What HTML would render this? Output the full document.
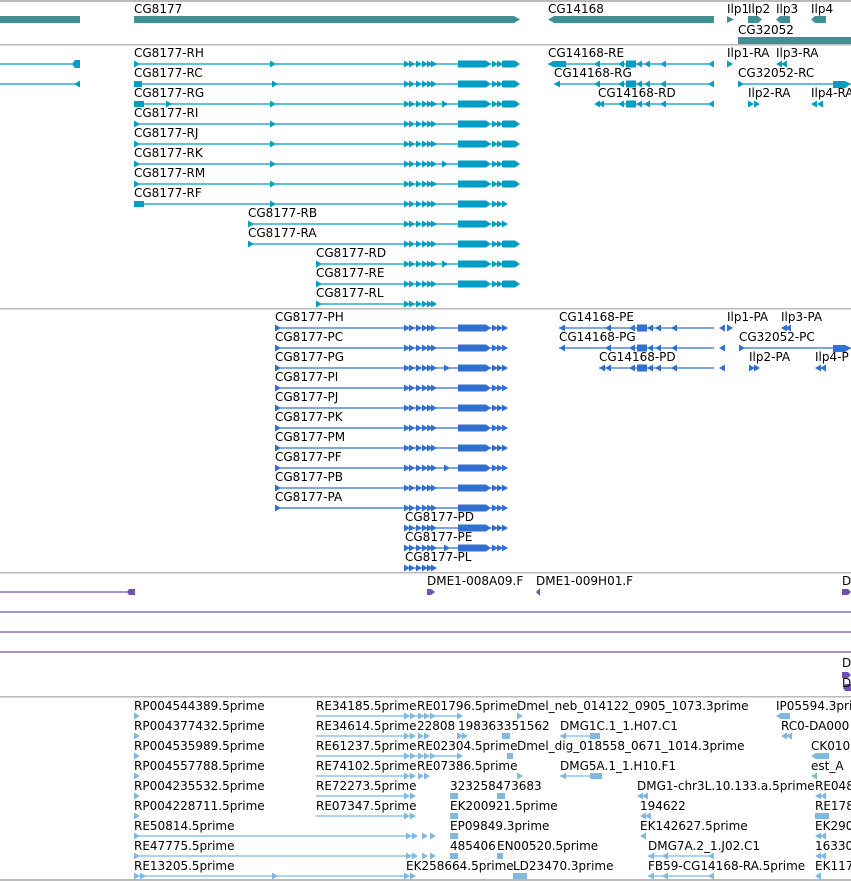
<!DOCTYPE html>
<html><head><meta charset="utf-8"><style>
html,body{margin:0;padding:0;background:#fff;width:851px;height:881px;overflow:hidden}
svg{display:block}
text{font-family:"DejaVu Sans","Liberation Sans",sans-serif;font-size:12px;fill:#000}
</style></head><body>
<svg width="851" height="881" viewBox="0 0 851 881" xmlns="http://www.w3.org/2000/svg">
<defs>
<polygon id="ra" points="0,-3.5 6,0 0,3.5"/>
<polygon id="la" points="6,-3.5 0,0 6,3.5"/>
<g id="tr">
 <use href="#ra" x="404"/><use href="#ra" x="409"/><use href="#ra" x="416"/><use href="#ra" x="422"/><use href="#ra" x="427"/><use href="#ra" x="431"/>
 <rect x="458" y="-3.5" width="28" height="7"/><polygon points="486,-3.5 491,0 486,3.5"/>
 <use href="#ra" x="492"/><use href="#ra" x="497"/><use href="#ra" x="502"/>
</g>
<g id="tre"><use href="#tr"/><rect x="503" y="-3.5" width="12" height="7"/><polygon points="515,-3.5 520,0 515,3.5"/></g>
<g id="cgl">
 <use href="#la" x="594"/><use href="#la" x="618"/><rect x="626" y="-3.5" width="10" height="7"/><use href="#la" x="636"/><use href="#la" x="644"/><use href="#la" x="660"/><use href="#la" x="708"/>
</g>
<g id="ec"><use href="#ra" x="404"/><use href="#ra" x="410"/></g>
</defs>
<g fill="#bbb"><rect x="0" y="0" width="851" height="2"/><rect x="0" y="44" width="851" height="1.5"/><rect x="0" y="308" width="851" height="1.5"/><rect x="0" y="572" width="851" height="1.5"/><rect x="0" y="696" width="851" height="1.5"/><rect x="0" y="879" width="851" height="2"/></g>

<g fill="#3f8f94">
<rect x="0" y="16" width="80" height="7"/>
<rect x="134" y="16" width="380" height="7"/><polygon points="514,16 520,19.5 514,23"/>
<rect x="554" y="16" width="160" height="7"/><polygon points="554,16 548,19.5 554,23"/>
<polygon points="727,16 734,19.5 727,23"/>
<rect x="748" y="16" width="10" height="7"/><polygon points="758,16 762,19.5 758,23"/>
<rect x="780" y="16" width="10" height="7"/><polygon points="780,16 776,19.5 780,23"/>
<rect x="815" y="16" width="11" height="7"/><polygon points="815,16 811,19.5 815,23"/>
<rect x="738" y="37" width="113" height="7"/>
</g>
<text x="134" y="13">CG8177</text><text x="548" y="13">CG14168</text>
<text x="727" y="13">Ilp1</text><text x="748" y="13">Ilp2</text><text x="776" y="13">Ilp3</text><text x="811" y="13">Ilp4</text>
<text x="738" y="34">CG32052</text>

<g fill="#009ec3" stroke="none">
<g stroke="#009ec3" stroke-width="1.2">
<line x1="0" y1="64" x2="80" y2="64"/><line x1="0" y1="84" x2="80" y2="84"/>
<line x1="134" y1="64" x2="515" y2="64"/><line x1="134" y1="84" x2="515" y2="84"/><line x1="134" y1="104" x2="515" y2="104"/>
<line x1="134" y1="124" x2="515" y2="124"/><line x1="134" y1="144" x2="515" y2="144"/><line x1="134" y1="164" x2="515" y2="164"/>
<line x1="134" y1="184" x2="515" y2="184"/><line x1="134" y1="204" x2="505" y2="204"/>
<line x1="248" y1="224" x2="505" y2="224"/><line x1="248" y1="244" x2="515" y2="244"/>
<line x1="316" y1="264" x2="515" y2="264"/><line x1="316" y1="284" x2="515" y2="284"/><line x1="316" y1="304" x2="435" y2="304"/>
<line x1="548" y1="64" x2="714" y2="64"/><line x1="554" y1="84" x2="714" y2="84"/><line x1="598" y1="104" x2="714" y2="104"/>
<line x1="738" y1="84" x2="851" y2="84"/>
</g>
<polygon points="75,60 80,60 80,68 75,68 72,64"/><use href="#la" x="74" y="84"/>
<use href="#ra" x="134" y="64"/><use href="#ra" x="270" y="64"/><use href="#tre" y="64"/>
<rect x="134" y="81" width="8" height="6"/><use href="#ra" x="272" y="84"/><use href="#tre" y="84"/>
<rect x="134" y="101" width="10" height="6"/><use href="#ra" x="166" y="104"/><use href="#ra" x="270" y="104"/><use href="#ra" x="442" y="104"/><use href="#tre" y="104"/>
<use href="#ra" x="134" y="124"/><use href="#ra" x="270" y="124"/><use href="#tre" y="124"/>
<use href="#ra" x="134" y="144"/><use href="#ra" x="270" y="144"/><use href="#tre" y="144"/>
<use href="#ra" x="134" y="164"/><use href="#ra" x="270" y="164"/><use href="#ra" x="442" y="164"/><use href="#tre" y="164"/>
<use href="#ra" x="134" y="184"/><use href="#ra" x="270" y="184"/><use href="#tre" y="184"/>
<rect x="134" y="201" width="10" height="6"/><use href="#ra" x="270" y="204"/><use href="#tr" y="204"/>
<use href="#ra" x="248" y="224"/><use href="#tr" y="224"/>
<use href="#ra" x="248" y="244"/><use href="#tre" y="244"/>
<use href="#ra" x="316" y="264"/><use href="#ra" x="442" y="264"/><use href="#tre" y="264"/>
<use href="#ra" x="316" y="284"/><use href="#tre" y="284"/>
<use href="#ra" x="316" y="304"/><use href="#ra" x="404" y="304"/><use href="#ra" x="409" y="304"/><use href="#ra" x="416" y="304"/><use href="#ra" x="422" y="304"/><use href="#ra" x="427" y="304"/><use href="#ra" x="431" y="304"/>
<use href="#cgl" y="64"/><rect x="554" y="61" width="12" height="6"/><use href="#la" x="548" y="64"/>
<use href="#cgl" y="84"/><use href="#la" x="554" y="84"/>
<use href="#cgl" y="104"/><use href="#la" x="598" y="104"/>
<use href="#ra" x="727" y="64"/><use href="#la" x="776" y="64"/><use href="#la" x="781" y="64"/>
<use href="#ra" x="738" y="84"/><rect x="833" y="81" width="12" height="7"/><polygon points="845,81 851,84 845,88"/>
<use href="#ra" x="748" y="104"/><use href="#ra" x="754" y="104"/>
<use href="#la" x="811" y="104"/><use href="#la" x="817" y="104"/>
</g>
<text x="134" y="57">CG8177-RH</text><text x="134" y="77">CG8177-RC</text><text x="134" y="97">CG8177-RG</text>
<text x="134" y="117">CG8177-RI</text><text x="134" y="137">CG8177-RJ</text><text x="134" y="157">CG8177-RK</text>
<text x="134" y="177">CG8177-RM</text><text x="134" y="197">CG8177-RF</text>
<text x="248" y="217">CG8177-RB</text><text x="248" y="237">CG8177-RA</text>
<text x="316" y="257">CG8177-RD</text><text x="316" y="277">CG8177-RE</text><text x="316" y="297">CG8177-RL</text>
<text x="548" y="57">CG14168-RE</text><text x="554" y="77">CG14168-RG</text><text x="598" y="97">CG14168-RD</text>
<text x="727" y="57">Ilp1-RA</text><text x="776" y="57">Ilp3-RA</text><text x="738" y="77">CG32052-RC</text>
<text x="748" y="97">Ilp2-RA</text><text x="811" y="97">Ilp4-RA</text>

<g fill="#3070d0">
<g stroke="#3070d0" stroke-width="1.2">
<line x1="275" y1="328" x2="505" y2="328"/><line x1="275" y1="348" x2="505" y2="348"/><line x1="275" y1="368" x2="505" y2="368"/>
<line x1="275" y1="388" x2="505" y2="388"/><line x1="275" y1="408" x2="505" y2="408"/><line x1="275" y1="428" x2="505" y2="428"/>
<line x1="275" y1="448" x2="505" y2="448"/><line x1="275" y1="468" x2="505" y2="468"/><line x1="275" y1="488" x2="505" y2="488"/>
<line x1="275" y1="508" x2="505" y2="508"/>
<line x1="405" y1="528" x2="505" y2="528"/><line x1="405" y1="548" x2="505" y2="548"/><line x1="405" y1="568" x2="435" y2="568"/>
<line x1="559" y1="328" x2="714" y2="328"/><line x1="559" y1="348" x2="714" y2="348"/><line x1="599" y1="368" x2="714" y2="368"/>
<line x1="739" y1="348" x2="851" y2="348"/>
</g>
<use href="#ra" x="275" y="328"/><use href="#tr" y="328"/>
<use href="#ra" x="275" y="348"/><use href="#tr" y="348"/>
<use href="#ra" x="275" y="368"/><use href="#ra" x="444" y="368"/><use href="#tr" y="368"/>
<use href="#ra" x="275" y="388"/><use href="#tr" y="388"/>
<use href="#ra" x="275" y="408"/><use href="#tr" y="408"/>
<use href="#ra" x="275" y="428"/><use href="#tr" y="428"/>
<use href="#ra" x="275" y="448"/><use href="#tr" y="448"/>
<use href="#ra" x="275" y="468"/><use href="#ra" x="444" y="468"/><use href="#tr" y="468"/>
<use href="#ra" x="275" y="488"/><use href="#tr" y="488"/>
<use href="#ra" x="275" y="508"/><use href="#tr" y="508"/>
<use href="#tr" y="528"/><use href="#ra" x="444" y="548"/><use href="#tr" y="548"/>
<use href="#ra" x="404" y="568"/><use href="#ra" x="409" y="568"/><use href="#ra" x="416" y="568"/><use href="#ra" x="422" y="568"/><use href="#ra" x="427" y="568"/><use href="#ra" x="431" y="568"/>
<use href="#cgl" x="11" y="328"/><use href="#la" x="559" y="328"/><use href="#cgl" x="11" y="348"/><use href="#la" x="559" y="348"/><use href="#cgl" x="11" y="368"/><use href="#la" x="599" y="368"/>
<use href="#ra" x="727" y="328"/><use href="#la" x="781" y="328"/><use href="#la" x="785" y="328"/>
<use href="#ra" x="739" y="348"/><rect x="833" y="345" width="12" height="7"/><polygon points="845,345 851,348 845,352"/>
<use href="#ra" x="749" y="368"/><use href="#ra" x="754" y="368"/><use href="#la" x="815" y="368"/><use href="#la" x="820" y="368"/>
</g>
<text x="275" y="321">CG8177-PH</text><text x="275" y="341">CG8177-PC</text><text x="275" y="361">CG8177-PG</text>
<text x="275" y="381">CG8177-PI</text><text x="275" y="401">CG8177-PJ</text><text x="275" y="421">CG8177-PK</text>
<text x="275" y="441">CG8177-PM</text><text x="275" y="461">CG8177-PF</text><text x="275" y="481">CG8177-PB</text>
<text x="275" y="501">CG8177-PA</text>
<text x="405" y="521">CG8177-PD</text><text x="405" y="541">CG8177-PE</text><text x="405" y="561">CG8177-PL</text>
<text x="559" y="321">CG14168-PE</text><text x="559" y="341">CG14168-PG</text><text x="599" y="361">CG14168-PD</text>
<text x="727" y="321">Ilp1-PA</text><text x="781" y="321">Ilp3-PA</text><text x="739" y="341">CG32052-PC</text>
<text x="749" y="361">Ilp2-PA</text><text x="815" y="361">Ilp4-P</text>

<g fill="#7050b0">
<g stroke="#7050b0" stroke-width="1.2">
<line x1="0" y1="592" x2="130" y2="592"/><line x1="0" y1="612" x2="851" y2="612"/><line x1="0" y1="632" x2="851" y2="632"/><line x1="0" y1="652" x2="851" y2="652"/>
</g>
<polygon points="129,589 135,589 135,595 129,595 127,592"/>
<polygon points="427,589 431,589 435,592 431,595 427,595"/>
<polygon points="540,588 536,592 540,596"/>
<polygon points="842,589 848,589 851,592 848,595 842,595"/>
<polygon points="842,672 848,672 851,675 848,678 842,678"/>
<polygon points="851,684 845,684 843,688 845,691 851,691"/>
</g>
<text x="427" y="585">DME1-008A09.F</text><text x="536" y="585">DME1-009H01.F</text><text x="842" y="585">D</text>
<text x="842" y="667">D</text><text x="842" y="687">D</text>

<g fill="#80b8e0">
<g stroke="#80b8e0" stroke-width="1.2">
<line x1="316" y1="716" x2="462" y2="716"/><line x1="316" y1="736" x2="415" y2="736"/><line x1="316" y1="756" x2="462" y2="756"/>
<line x1="316" y1="776" x2="415" y2="776"/><line x1="316" y1="796" x2="415" y2="796"/><line x1="316" y1="816" x2="415" y2="816"/>
<line x1="134" y1="836" x2="415" y2="836"/><line x1="134" y1="856" x2="415" y2="856"/><line x1="134" y1="876" x2="415" y2="876"/>
<line x1="560" y1="736" x2="600" y2="736"/><line x1="560" y1="776" x2="600" y2="776"/>
<line x1="648" y1="856" x2="714" y2="856"/><line x1="648" y1="876" x2="714" y2="876"/>
</g>
<use href="#ra" x="134" y="716"/><use href="#ra" x="134" y="736"/><use href="#ra" x="134" y="756"/><use href="#ra" x="134" y="776"/><use href="#ra" x="134" y="796"/><use href="#ra" x="134" y="816"/>
<use href="#ra" x="134" y="836"/><use href="#ra" x="134" y="856"/><use href="#ra" x="134" y="876"/><use href="#ra" x="140" y="876"/><use href="#ra" x="272" y="876"/>
<use href="#ec" y="716"/><use href="#ec" y="736"/><use href="#ec" y="756"/><use href="#ec" y="776"/><use href="#ec" y="796"/><use href="#ec" y="816"/><use href="#ec" y="876"/>
<use href="#ec" x="2" y="836"/><use href="#ra" x="422" y="836"/><use href="#ra" x="430" y="836"/>
<use href="#ec" x="2" y="856"/><use href="#ra" x="422" y="856"/><use href="#ra" x="430" y="856"/>
<use href="#ra" x="418" y="716"/><use href="#ra" x="424" y="716"/><use href="#ra" x="430" y="716"/><use href="#ra" x="457" y="716"/>
<use href="#ra" x="418" y="736"/><use href="#ra" x="424" y="736"/><use href="#ra" x="457" y="736"/><use href="#ra" x="462" y="736"/><rect x="502" y="733" width="8" height="6"/>
<use href="#ra" x="418" y="756"/><use href="#ra" x="424" y="756"/><use href="#ra" x="430" y="756"/><use href="#ra" x="457" y="756"/><rect x="507" y="753" width="6" height="6"/>
<use href="#ra" x="418" y="776"/><use href="#ra" x="424" y="776"/><use href="#ra" x="517" y="716"/><use href="#ra" x="517" y="776"/>
<rect x="450" y="793" width="8" height="6"/><rect x="497" y="793" width="8" height="6"/>
<rect x="450" y="813" width="8" height="6"/><rect x="450" y="833" width="8" height="6"/><rect x="450" y="853" width="8" height="6"/><rect x="497" y="853" width="6" height="6"/>
<rect x="513" y="873" width="14" height="6"/>
<use href="#la" x="560" y="736"/><rect x="590" y="733" width="10" height="6"/>
<use href="#la" x="560" y="776"/><rect x="590" y="773" width="12" height="6"/>
<use href="#la" x="637" y="796"/><use href="#la" x="642" y="796"/><use href="#la" x="640" y="816"/><use href="#la" x="645" y="816"/><use href="#la" x="640" y="836"/>
<use href="#la" x="648" y="856"/><use href="#la" x="662" y="856"/><use href="#la" x="708" y="856"/>
<use href="#la" x="648" y="876"/><use href="#la" x="662" y="876"/><use href="#la" x="708" y="876"/>
<rect x="780" y="713" width="10" height="6"/><use href="#la" x="776" y="716"/>
<use href="#la" x="781" y="736"/><use href="#la" x="786" y="736"/>
<rect x="815" y="753" width="14" height="6"/><use href="#la" x="811" y="756"/><use href="#la" x="811" y="776"/>
<use href="#la" x="815" y="796"/><use href="#la" x="820" y="796"/><rect x="815" y="813" width="14" height="6"/>
<use href="#la" x="815" y="836"/><use href="#la" x="820" y="836"/><use href="#la" x="815" y="856"/><use href="#la" x="820" y="856"/><use href="#la" x="815" y="876"/>
</g>
<g>
<text x="134" y="710">RP004544389.5prime</text><text x="134" y="730">RP004377432.5prime</text><text x="134" y="750">RP004535989.5prime</text>
<text x="134" y="770">RP004557788.5prime</text><text x="134" y="790">RP004235532.5prime</text><text x="134" y="810">RP004228711.5prime</text>
<text x="134" y="830">RE50814.5prime</text><text x="134" y="850">RE47775.5prime</text><text x="134" y="870">RE13205.5prime</text>
<text x="316" y="710">RE34185.5prime</text><text x="316" y="730">RE34614.5prime</text><text x="316" y="750">RE61237.5prime</text>
<text x="316" y="770">RE74102.5prime</text><text x="316" y="790">RE72273.5prime</text><text x="316" y="810">RE07347.5prime</text>
<text x="417" y="710">RE01796.5prime</text><text x="417" y="730">22808</text><text x="458" y="730">198363351562</text>
<text x="417" y="750">RE02304.5prime</text><text x="417" y="770">RE07386.5prime</text>
<text x="517" y="710">Dmel_neb_014122_0905_1073.3prime</text><text x="560" y="730">DMG1C.1_1.H07.C1</text>
<text x="517" y="750">Dmel_dig_018558_0671_1014.3prime</text><text x="560" y="770">DMG5A.1_1.H10.F1</text>
<text x="450" y="790">323258473683</text><text x="450" y="810">EK200921.5prime</text><text x="450" y="830">EP09849.3prime</text>
<text x="450" y="850">485406</text><text x="497" y="850">EN00520.5prime</text>
<text x="406" y="870">EK258664.5prime</text><text x="513" y="870">LD23470.3prime</text>
<text x="637" y="790">DMG1-chr3L.10.133.a.5prime</text><text x="640" y="810">194622</text><text x="640" y="830">EK142627.5prime</text>
<text x="648" y="850">DMG7A.2_1.J02.C1</text><text x="648" y="870">FB59-CG14168-RA.5prime</text>
<text x="776" y="710">IP05594.3prime</text><text x="781" y="730">RC0-DA000</text><text x="811" y="750">CK010</text><text x="811" y="770">est_A</text>
<text x="815" y="790">RE048</text><text x="815" y="810">RE178</text><text x="815" y="830">EK290</text><text x="815" y="850">16330</text><text x="815" y="870">EK117</text>
</g>
</svg>
</body></html>
